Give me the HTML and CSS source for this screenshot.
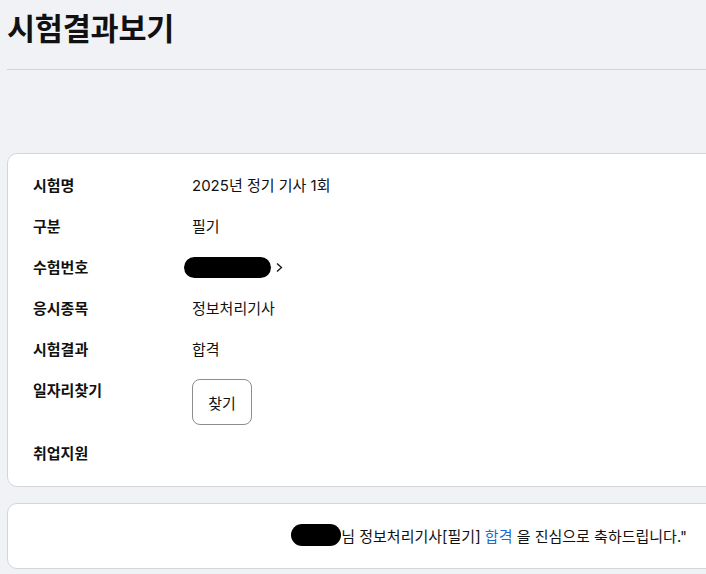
FILE: index.html
```html
<!DOCTYPE html>
<html lang="ko">
<head>
<meta charset="utf-8">
<title>시험결과보기</title>
<link rel="stylesheet" href="styles.css">
</head>
<body>
<div class="page">
  <header class="page-header">
    <h1 class="title">시험결과보기</h1>
  </header>
  <section class="card info-card">
    <div class="row"><div class="label">시험명</div><div class="value">2025년 정기 기사 1회</div></div>
    <div class="row"><div class="label">구분</div><div class="value">필기</div></div>
    <div class="row"><div class="label">수험번호</div><div class="value"><span class="redact redact-num"></span><svg class="chev" width="9" height="11" viewBox="0 0 9 11"><path d="M2 1.5 L6.5 5.5 L2 9.5" fill="none" stroke="#111" stroke-width="1.3"/></svg></div></div>
    <div class="row"><div class="label">응시종목</div><div class="value">정보처리기사</div></div>
    <div class="row"><div class="label">시험결과</div><div class="value">합격</div></div>
    <div class="row"><div class="label">일자리찾기</div><div class="value"><button class="btn">찾기</button></div></div>
    <div class="row"><div class="label">취업지원</div><div class="value"></div></div>
  </section>
  <section class="card msg-card">
    <p class="msg"><span class="redact redact-name"></span>님 정보처리기사[필기] <span class="pass">합격</span> 을 진심으로 축하드립니다."</p>
  </section>
</div>
</body>
</html>
```

FILE: styles.css
```css
html, body {
  margin: 0;
  padding: 0;
  background: #f1f2f6;
  overflow: hidden;
}
body {
  font-family: "Inter", "Noto Sans CJK KR", sans-serif;
  color: #111;
}
.page {
  width: 780px;
  padding: 0 0 0 7px;
}
.page-header {
  border-bottom: 1px solid #d2d3d8;
  height: 70px;
  box-sizing: border-box;
}
.title {
  margin: 0;
  padding-top: 9px;
  font-size: 30.5px;
  line-height: 40px;
  font-weight: 700;
  letter-spacing: -0.2px;
}
.card {
  background: #fff;
  border: 1px solid #d5d6da;
  border-radius: 10px;
}
.info-card {
  margin-top: 83px;
  padding: 11px 26px 12px 25px;
}
.row {
  display: grid;
  grid-template-columns: 159px 1fr;
  padding: 10px 0;
  font-size: 15px;
  line-height: 21px;
}
.label {
  font-weight: 600;
}
.value {
  display: flex;
  align-items: center;
  font-weight: 400;
}
.row:nth-child(6) .value { align-items: flex-start; }
.redact {
  display: inline-block;
  background: #000;
  border-radius: 12px;
}
.redact-num {
  width: 87px;
  height: 21px;
  margin-left: -8px;
  border-radius: 11px;
}
.chev { margin-left: 4px; }
.btn {
  margin-top: -1px;
  margin-bottom: -2px;
  width: 60px;
  height: 46px;
  background: #fff;
  border: 1px solid #8d8d8d;
  border-radius: 8px;
  font-family: inherit;
  font-size: 15px;
  color: #111;
  padding: 0;
}
.msg-card {
  margin-top: 16px;
  height: 64px;
  display: flex;
  align-items: center;
  justify-content: flex-end;
  padding-right: 99px;
}
.msg {
  margin: 0;
  font-size: 15px;
  line-height: 21px;
  display: flex;
  align-items: center;
  white-space: pre;
}
.redact-name {
  width: 50px;
  height: 22px;
  margin-top: -3px;
}
.pass {
  color: #1b6fd1;
}
```
